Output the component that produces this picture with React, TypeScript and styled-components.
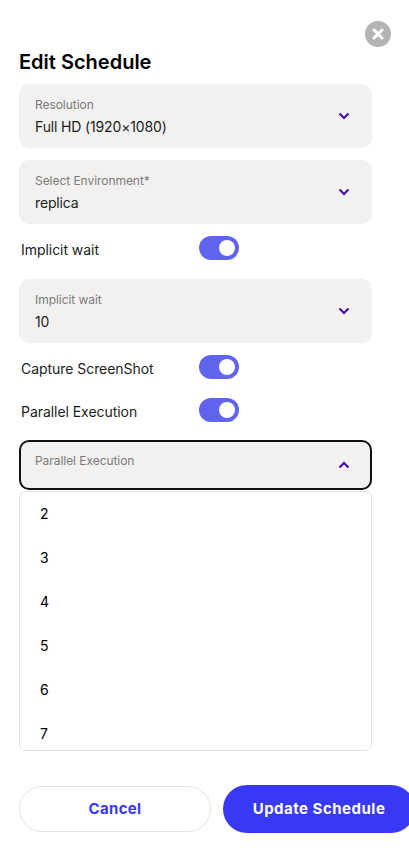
import React from "react";
import styled, { createGlobalStyle } from "styled-components";

const GlobalStyle = createGlobalStyle`
  html, body {
    margin: 0;
    padding: 0;
    background: #fff;
    overflow: hidden;
  }
  body {
    font-family: Inter, "Liberation Sans", sans-serif;
  }
`;

const Page = styled.div`
  width: 409px;
  height: 856px;
  box-sizing: border-box;
  padding: 21px 0 0 19px;
  display: flex;
  flex-direction: column;
  overflow: hidden;
`;

const CloseRow = styled.div`
  display: flex;
  justify-content: flex-end;
  padding-right: 18px;
`;

const CloseButton = styled.button`
  width: 26px;
  height: 26px;
  padding: 0;
  border: 0;
  border-radius: 50%;
  background: #b3b3b3;
  display: flex;
  align-items: center;
  justify-content: center;
`;

const Title = styled.h2`
  margin: 3px 0 10px;
  font-size: 20px;
  line-height: 24px;
  font-weight: 600;
  color: #000;
`;

const Form = styled.div`
  width: 353px;
  display: flex;
  flex-direction: column;
`;

const SelectBox = styled.div<{ $open?: boolean; $after?: number }>`
  box-sizing: border-box;
  height: ${(p) => (p.$open ? 50 : 64)}px;
  margin-bottom: ${(p) => p.$after ?? 12}px;
  padding: ${(p) => (p.$open ? "11px 14px" : "13px 16px")};
  border-radius: 10px;
  background: #f2f1f0;
  border: ${(p) => (p.$open ? "2px solid #111" : "0")};
  display: flex;
  align-items: center;
  justify-content: space-between;
`;

const SelectText = styled.div`
  display: flex;
  flex-direction: column;
  align-self: flex-start;
`;

const SelectLabel = styled.span`
  font-size: 12px;
  line-height: 16px;
  letter-spacing: -0.05px;
  color: #7a7a7a;
`;

const SelectValue = styled.span`
  margin-top: 5px;
  font-size: 14px;
  line-height: 18px;
  letter-spacing: -0.15px;
  color: #1c1c1c;
`;

const Chevron = styled.svg<{ $open?: boolean }>`
  width: 12px;
  height: 8px;
  margin-right: 6px;
  transform: ${(p) => (p.$open ? "rotate(180deg)" : "none")};
`;

const ToggleRow = styled.div<{ $after: number }>`
  height: 24px;
  margin-bottom: ${(p) => p.$after}px;
  padding-left: 2px;
  display: flex;
  align-items: center;
  font-size: 14px;
  letter-spacing: -0.05px;
  color: #1c1c1c;
`;

const ToggleLabel = styled.span`
  width: 178px;
  padding-top: 2px;
`;

const Toggle = styled.div`
  box-sizing: border-box;
  width: 40px;
  height: 24px;
  padding: 4px;
  border-radius: 12px;
  background: #5f63ee;
  display: flex;
  justify-content: flex-end;
`;

const Knob = styled.div`
  width: 16px;
  height: 16px;
  border-radius: 50%;
  background: #fff;
`;

const Menu = styled.ul`
  box-sizing: border-box;
  height: 260px;
  margin: 1px 0 0;
  padding: 0;
  list-style: none;
  background: #fff;
  border: 1px solid #e4e4e4;
  border-radius: 6px;
  overflow: hidden;
`;

const MenuItem = styled.li`
  box-sizing: border-box;
  height: 44px;
  padding: 0 0 1px 20px;
  display: flex;
  align-items: center;
  font-size: 14px;
  color: #000;
`;

const Actions = styled.div`
  margin-top: 34px;
  display: flex;
  align-items: center;
  gap: 12px;
  width: 420px;
`;

const CancelButton = styled.button`
  box-sizing: border-box;
  width: 192px;
  height: 46px;
  padding: 0 0 2px;
  border: 1px solid #e2e2e2;
  border-radius: 23px;
  background: #fff;
  color: #3838f5;
  font-family: inherit;
  font-size: 15px;
  font-weight: 700;
  letter-spacing: 0.3px;
`;

const UpdateButton = styled.button`
  box-sizing: border-box;
  width: 192px;
  height: 48px;
  padding: 0 0 2px;
  border: 0;
  border-radius: 24px;
  background: #3838f5;
  color: #fff;
  font-family: inherit;
  font-size: 15px;
  font-weight: 700;
  letter-spacing: 0.5px;
`;

const ChevronIcon = ({ open }: { open?: boolean }) => (
  <Chevron $open={open} viewBox="0 0 12 8" fill="none">
    <path d="M1.5 1.5 6 6l4.5-4.5" stroke="#4a0fa8" strokeWidth="2.2" />
  </Chevron>
);

const Select = ({ label, value, after }: { label: string; value: string; after?: number }) => (
  <SelectBox $after={after}>
    <SelectText>
      <SelectLabel>{label}</SelectLabel>
      <SelectValue>{value}</SelectValue>
    </SelectText>
    <ChevronIcon />
  </SelectBox>
);

const SwitchRow = ({ label, after }: { label: string; after: number }) => (
  <ToggleRow $after={after}>
    <ToggleLabel>{label}</ToggleLabel>
    <Toggle>
      <Knob />
    </Toggle>
  </ToggleRow>
);

export default function App() {
  return (
    <Page>
      <GlobalStyle />
      <CloseRow>
        <CloseButton>
          <svg width="12" height="12" viewBox="0 0 12 12" fill="none">
            <path d="M2 2l8 8M10 2l-8 8" stroke="#fff" strokeWidth="3" strokeLinecap="round" />
          </svg>
        </CloseButton>
      </CloseRow>
      <Title>Edit Schedule</Title>
      <Form>
        <Select label="Resolution" value="Full HD (1920×1080)" />
        <Select label="Select Environment*" value="replica" />
        <SwitchRow label="Implicit wait" after={19} />
        <Select label="Implicit wait" value="10" />
        <SwitchRow label="Capture ScreenShot" after={19} />
        <SwitchRow label="Parallel Execution" after={18} />
        <SelectBox $open $after={0}>
          <SelectText>
            <SelectLabel>Parallel Execution</SelectLabel>
          </SelectText>
          <ChevronIcon open />
        </SelectBox>
        <Menu>
          {[2, 3, 4, 5, 6, 7].map((n) => (
            <MenuItem key={n}>{n}</MenuItem>
          ))}
        </Menu>
      </Form>
      <Actions>
        <CancelButton>Cancel</CancelButton>
        <UpdateButton>Update Schedule</UpdateButton>
      </Actions>
    </Page>
  );
}
